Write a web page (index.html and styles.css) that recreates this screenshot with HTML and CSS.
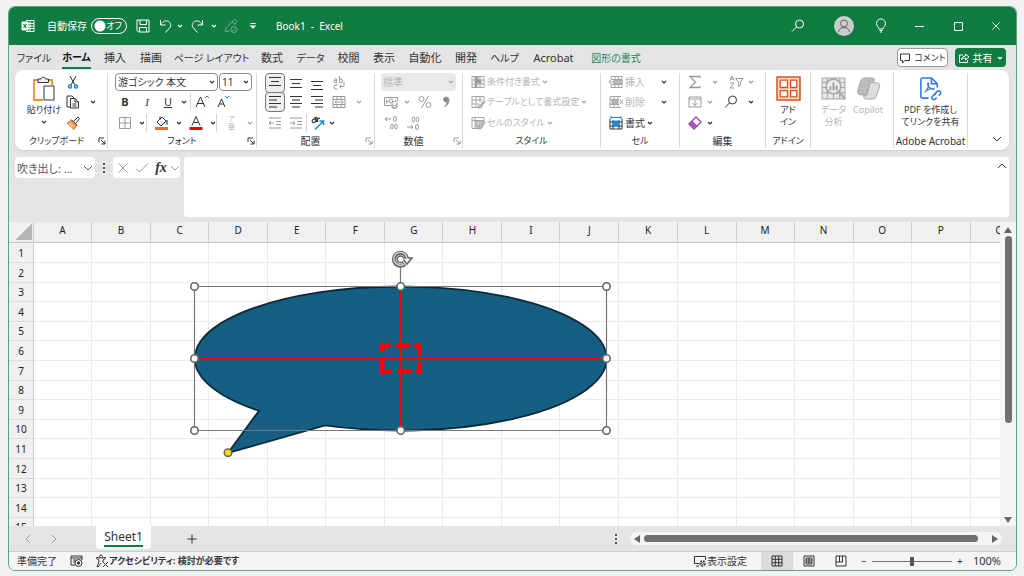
FILE: index.html
```html
<!DOCTYPE html>
<html lang="ja">
<head>
<meta charset="utf-8">
<title>Book1 - Excel</title>
<link rel="stylesheet" href="styles.css">
</head>
<body>
<svg class="defs" aria-hidden="true">
  <symbol id="chev" viewBox="0 0 8 8"><path d="M2 3l2 2 2-2"/></symbol>
  <symbol id="wide" viewBox="0 0 12 12"><path d="M2 4l4 4 4-4"/></symbol>
  <symbol id="launch" viewBox="0 0 8 8"><path d="M1 5V1h5M3 3l4 4M7 3.500V7H3.500"/></symbol>
  <symbol id="excel" viewBox="0 0 14 14"><path d="M5 1.500h8v11H5M5 4.500h8M5 7h8M5 9.500h8M9 1.500v11"/><path d="M1 3h6v8H1z" fill="#fff"/><path d="M2.500 5l3 4M5.500 5l-3 4" stroke="#107c41" stroke-width="1.200"/></symbol>
  <symbol id="save" viewBox="0 0 16 16"><path d="M2 2h12v12H3.500L2 12.500zM5 2v4.500h6.500V2M4.500 14V9.500h7V14"/></symbol>
  <symbol id="undo" viewBox="0 0 16 16"><path d="M2.500 2v5h5M2.500 7C5 3 8 2 10.500 3.500s3 4.500 1 6.500L7.500 14.500"/></symbol>
  <symbol id="redo" viewBox="0 0 16 16"><path d="M13.500 2v5h-5M13.500 7C11 3 8 2 5.500 3.500s-3 4.500-1 6.500l4 4.500"/></symbol>
  <symbol id="ink" viewBox="0 0 16 16"><path d="M2 14l1-4 8-8c1.500-1 3.500 1 2.500 2.500L11 7M2 14l5-1.500M9 4l3 2"/><circle cx="11" cy="11.500" r="3"/><path d="M9 13.500l4-4"/></symbol>
  <symbol id="qat" viewBox="0 0 8 8"><path d="M1.500 1.500h5M2 4l2 2 2-2z"/></symbol>
  <symbol id="search" viewBox="0 0 16 16"><circle cx="9.500" cy="6" r="4"/><path d="M6.500 9L2 13.500"/></symbol>
  <symbol id="bulb" viewBox="0 0 16 16"><path d="M6 11c0-2-2.500-2.500-2.500-5.500a4.500 4.500 0 0 1 9 0C12.500 8.500 10 9 10 11zM6.500 12.500h3M7 14h2"/></symbol>
  <symbol id="user" viewBox="0 0 20 20"><circle cx="10" cy="7.500" r="3.500"/><path d="M4.500 16c.5-6 10.500-6 11 0"/></symbol>
  <symbol id="paste" viewBox="0 0 24 26"><path d="M7 4H2v20h9M16 4h4v5" stroke="#e8912d" stroke-width="1.800"/><path d="M6 6.500V3h3c.5-2.500 4-2.500 4.500 0h3v3.500z" fill="#eee"/><path d="M12 10h10v14H12z" fill="#fff"/></symbol>
  <symbol id="cut" viewBox="0 0 16 16"><path d="M5 2l5 9M11 2l-5 9"/><g stroke="#1e88d2" stroke-width="1.500"><circle cx="5" cy="12.500" r="1.500"/><circle cx="11" cy="12.500" r="1.500"/></g></symbol>
  <symbol id="copy" viewBox="0 0 16 16"><path d="M5 13H2V2h5l2 2M5.500 4.500H10l3.500 3.500v6h-8zM10 4.500V8h3.500M7.500 10h4M7.500 12h4"/></symbol>
  <symbol id="brush" viewBox="0 0 16 16"><path d="M9 6l4-4 1.500 1.500L11 8" fill="#fff"/><path d="M2 8l5-3 5 5-3 4.500z" fill="#f7a258" stroke="#e07820"/><path d="M4 10l2-1M6 12l2-2" stroke="#fff"/><path d="M6 4.500l6 6"/></symbol>
  <symbol id="grow" viewBox="0 0 16 16"><path d="M2 13L6.500 3 11 13M3.500 9.500h6"/><path d="M11 4l2-2 2 2" stroke="#1e88d2"/></symbol>
  <symbol id="shrink" viewBox="0 0 16 16"><path d="M3 13l3.500-8 3.500 8M4.500 10h4.500"/><path d="M10 2l2 2 2-2" stroke="#1e88d2"/></symbol>
  <symbol id="border" viewBox="0 0 16 16"><path d="M2.500 2.500h11v11h-11zM8 2.500v11M2.500 8h11"/></symbol>
  <symbol id="fill" viewBox="0 0 16 16"><path d="M3 7l5-5 4 4-5 5zM6 1.500V5"/><path d="M13 5v4M12 5.500l1.500 4" stroke="#1e88d2" stroke-width="1.500"/><path d="M1 12h13v3H1z" fill="#ed7031" stroke="none"/></symbol>
  <symbol id="color" viewBox="0 0 16 16"><path d="M4 10.500L8 1.500l4 9M5.500 7.500h5"/><path d="M1.500 12h13v3h-13z" fill="#f00000" stroke="none"/></symbol>
  <symbol id="top" viewBox="0 0 16 16"><path d="M2 2.500h12M4 6.500h8M2 10.500h12"/></symbol>
  <symbol id="mid" viewBox="0 0 16 16"><path d="M2 4.500h12M4 8.500h8M2 12.500h12"/></symbol>
  <symbol id="bot" viewBox="0 0 16 16"><path d="M2 6.500h12M4 10.500h8M2 14.500h12"/></symbol>
  <symbol id="left" viewBox="0 0 16 16"><path d="M2 2.500h12M2 6h8M2 9.500h12M2 13h8"/></symbol>
  <symbol id="center" viewBox="0 0 16 16"><path d="M2 2.500h12M4 6h8M2 9.500h12M4 13h8"/></symbol>
  <symbol id="right" viewBox="0 0 16 16"><path d="M2 2.500h12M6 6h8M2 9.500h12M6 13h8"/></symbol>
  <symbol id="wrap" viewBox="0 0 16 16"><path d="M3 4h2.500v3.500H3.500a1 1 0 0 1 0-2h2M8.500 1v6.500h1.500a1.700 1.700 0 0 0 0-3.500H8.500M6.500 10H5a1.700 1.700 0 0 0 0 4h1.500M13 7v4.500H8.500M10.500 9.500l-2 2 2 2"/></symbol>
  <symbol id="merge" viewBox="0 0 16 16"><path d="M2 2.500h12v11H2zM2 5.500h12M2 10.500h12M6 2.500v3M10 2.500v3M6 10.500v3M10 10.500v3M4 8h8M5.500 6.500L4 8l1.500 1.500M10.500 6.500L12 8l-1.500 1.500"/></symbol>
  <symbol id="outdent" viewBox="0 0 16 16"><path d="M2 3h12M9 6.500h5M9 9.500h5M2 13h12M7 8H2M4 6L2 8l2 2"/></symbol>
  <symbol id="indent" viewBox="0 0 16 16"><path d="M2 3h12M9 6.500h5M9 9.500h5M2 13h12M2 8h5M5 6l2 2-2 2"/></symbol>
  <symbol id="orient" viewBox="0 0 16 16"><path d="M3 4.500c-2 2 0 4 2 2.500s0-4-2-2.500M5 4l2 3M7 5.500c2-1 0-4-2-3L8 7M10 3.500c-1-1-3 0-2 2" stroke-width="1.200"/><path d="M5 14.500l8-8M9.500 6H13.500v4" stroke="#1e88d2" stroke-width="1.500"/></symbol>
  <symbol id="cash" viewBox="0 0 16 16"><path d="M8 11.500H1.500v-8h13V7M3.500 5.500v4M3.500 7.500h2M12.500 5.500V7"/><circle cx="8" cy="7" r="1.800"/><path d="M9 9v4c0 2 5 2 5 0V9c0-2-5-2-5 0zM9 10c0 2 5 2 5 0M9 12c0 2 5 2 5 0"/></symbol>
  <symbol id="pct" viewBox="0 0 16 16"><circle cx="4.500" cy="5" r="2.500"/><circle cx="11.500" cy="11" r="2.500"/><path d="M11.500 2l-7 12"/></symbol>
  <symbol id="comma" viewBox="0 0 16 16"><path d="M8 3a2.500 2.500 0 1 0 1 4.800C9 10 8 11 6.500 12.500 9.500 11.500 11 9 11 6a3 3 0 0 0-3-3z" fill="#888"/></symbol>
  <symbol id="inc" viewBox="0 0 16 16"><path d="M8 4H2M4 2L2 4l2 2M6 13v.5"/><ellipse cx="12" cy="4" rx="1.500" ry="2.500"/><ellipse cx="9" cy="11.500" rx="1.300" ry="2.500"/><ellipse cx="13" cy="11.500" rx="1.300" ry="2.500"/></symbol>
  <symbol id="dec" viewBox="0 0 16 16"><path d="M2 12h6M6 10l2 2-2 2M5 6v.5"/><ellipse cx="8.500" cy="4.500" rx="1.300" ry="2.500"/><ellipse cx="12.500" cy="4.500" rx="1.300" ry="2.500"/><ellipse cx="12" cy="12" rx="1.500" ry="2.500"/></symbol>
  <symbol id="cond" viewBox="0 0 16 16"><path d="M2 2.500h12v11H2zM2 6h12M2 10h12M6 2.500v11M10 2.500v11"/><path d="M5 3h3v3H5zM5 6h6v3H5zM5 10h2v3H5z" fill="#999"/></symbol>
  <symbol id="tfmt" viewBox="0 0 16 16"><path d="M8 13.500H2v-11h12v4M2 6h10M2 10h7M6 2.500v11M10 2.500v6"/><path d="M8 14c0-3 1-3 2.500-3L14 6.500l1 1-3 4.500c0 2-2 2-4 2z" fill="#bbb"/></symbol>
  <symbol id="cstyle" viewBox="0 0 16 16"><path d="M8 13.500H2v-11h12v4M2 5.500h12M5 2.500v11"/><path d="M6 6h7l-5 6H6z" fill="#ccc"/><path d="M8 14c0-3 1-3 2.500-3L14 6.500l1 1-3 4.500c0 2-2 2-4 2z" fill="#bbb"/></symbol>
  <symbol id="cins" viewBox="0 0 16 16"><path d="M3 5V2.500h11v11H3V11M3 5.500h11M3 10.500h11M7 2.500v11M10.500 2.500v11M1 8h8M3.500 5.500L1 8l2.500 2.500"/><path d="M6 6h8v4H6z" fill="#bbb"/></symbol>
  <symbol id="cdel" viewBox="0 0 16 16"><path d="M2 2.500h11M2 13.500h11M2 2.500v11M2 5.500h9M2 10.500h9M6 2.500v11M10 2.500v3M10 10.500v3M12 6l3 4M15 6l-3 4"/><path d="M4 6h6v4H4z" fill="#bbb"/></symbol>
  <symbol id="cfmt" viewBox="0 0 16 16"><path d="M2 4v10h12V4M2 7h12M2 11h12M5 5v9M11 5v9"/><path d="M5 6h6v5H5zM3 2.500h10M3 1v3M13 1v3" fill="#1e88d2" stroke="#1e88d2"/></symbol>
  <symbol id="sum" viewBox="0 0 16 16"><path d="M13 4V2.500H3L8.500 8 3 13.500h10V12" stroke-width="1.300"/></symbol>
  <symbol id="sort" viewBox="0 0 16 16"><path d="M2 6.500L4 2l2 4.500M2.500 5h3M2 9h4l-4 5h4M7.500 4.500H15L12.500 8v3l-2 1.500V8z"/></symbol>
  <symbol id="down" viewBox="0 0 16 16"><path d="M2 3h12v10H2zM2 5h12M8 6v5.500M5.500 9L8 11.500 10.500 9"/></symbol>
  <symbol id="eraser" viewBox="0 0 16 16"><path d="M2 9l7-7 5 5-7 7z" stroke="#a13fae" stroke-width="1.300"/><path d="M2 9l3-3 5 5-3 3z" fill="#b653c2" stroke="#a13fae"/></symbol>
  <symbol id="addin" viewBox="0 0 24 24"><path d="M1 1h22v22H1z" fill="#fbd9ca" stroke="#d95328" stroke-width="1.500"/><path d="M4 4h7v7H4zM14 4h6v7h-6zM4 14h7v6H4zM14 14h6v6h-6z" fill="#fff" stroke="#d95328" stroke-width="1.300"/></symbol>
  <symbol id="data" viewBox="0 0 24 24"><path d="M1 2h22v20H1zM1 6h22M1 11h22M1 16h22M6 2v20M18 2v20M12 16v6" fill="#e6e6e6"/><circle cx="12" cy="10" r="7" fill="#eee" stroke-width="1.500"/><path d="M9 10v4M12 6v8M15 9v5" stroke-width="2"/><path d="M17 15l6 7" stroke-width="2"/></symbol>
  <symbol id="copilot" viewBox="0 0 26 24"><path d="M9 1h8c2 0 2.500 1 1.500 4L15 16c-1 2-2 2.500-4 2.500H5c-3 0-4-2-3-5L5 4c1-2 2-3 4-3z" fill="#bcbcbc"/><path d="M15 6h6c3 0 4 1.500 3.500 4l-3 9c-1 3-2 4-4.500 4h-6c-2 0-3-1-3-3.500h1c2 0 2.500-1 3-3L14 8c.5-1.500.5-2 1-2z" fill="#ddd"/><path d="M5 18.500h4c2 0 2.500-1 3-3L14 8" /></symbol>
  <symbol id="pdf" viewBox="0 0 24 26"><path d="M10 23H4c-1.500 0-2-1-2-2V4c0-1 1-2 2-2h9l6 6v4M13 2v6h6" stroke="#2f78e0" stroke-width="1.600"/><path d="M6 17c2-2 4-6 4-9 0-1-1-1-1 0 0 3 3 5 6 6 1 0 1-1 0-1-3 0-7 1.500-9 4z" stroke="#2f78e0" stroke-width="1.200"/><path d="M15 20l4-4c2-2 5 1 3 3l-1.500 1.500M18 18l-4 3c-2 2 1 5 3 3l1.500-1.500" stroke="#2f78e0" stroke-width="1.500"/></symbol>
  <symbol id="bubble" viewBox="0 0 12 12"><path d="M1.500 2h9v6.500H6L3.500 11V8.500h-2z"/></symbol>
  <symbol id="share" viewBox="0 0 12 12"><path d="M5 3H1.500v7.500h8V8M3.500 7.500C4 5 5.500 4 7.500 4V2L11 5 7.500 8V6C6 6 4.500 6.500 3.500 7.500z"/></symbol>
  <symbol id="x" viewBox="0 0 12 12"><path d="M1.500 1.500l9 9M10.500 1.500l-9 9"/></symbol>
  <symbol id="tick" viewBox="0 0 14 12"><path d="M1 6.500L4.500 10 13 1.500"/></symbol>
  <symbol id="rec" viewBox="0 0 14 14"><path d="M6 11H2V2h11v4M2 4h11M4 6h3M4 8h2"/><circle cx="9.500" cy="9" r="3.500"/><circle cx="9.500" cy="9" r="1.200" fill="#333"/></symbol>
  <symbol id="a11y" viewBox="0 0 14 14"><circle cx="6" cy="2.500" r="1.500"/><path d="M5 4L1.500 3.500v1L4 6l-.5 3L2 12.500l1 .5 3-4M7 4l3.500-.5v1L8 6v2M8 8l5 5M13 8l-5 5"/></symbol>
  <symbol id="disp" viewBox="0 0 14 14"><path d="M6 9.500H1.500v-7h11V6M3 12h3"/><circle cx="9.500" cy="9.500" r="2.500" stroke-width="1.500" stroke-dasharray="2 1"/><circle cx="9.500" cy="9.500" r="1"/></symbol>
  <symbol id="vnorm" viewBox="0 0 12 12"><path d="M1 1h10v10H1zM1 4.300h10M1 7.700h10M4.300 1v10M7.700 1v10"/></symbol>
  <symbol id="vpage" viewBox="0 0 12 12"><path d="M1 1h10v10H1zM3 3h6v6H3zM3 5h6M3 7h6M6 3v6"/></symbol>
  <symbol id="vbreak" viewBox="0 0 12 12"><path d="M1 1h10v10H1zM4.500 1v6h3M7.500 1v6M1 7h3.500"/></symbol>
</svg>

<div class="window">
  <header class="titlebar">
    <div class="quick">
      <svg class="i14"><use href="#excel"/></svg>
      <label for="autosave">自動保存</label>
      <span class="toggle"><input type="checkbox" id="autosave"><span>オフ</span></span>
      <button aria-label="上書き保存"><svg class="i16"><use href="#save"/></svg></button>
      <button aria-label="元に戻す"><svg class="i16"><use href="#undo"/></svg></button>
      <button aria-label="元に戻す 一覧"><svg class="i8"><use href="#chev"/></svg></button>
      <button aria-label="やり直し"><svg class="i16"><use href="#redo"/></svg></button>
      <button aria-label="やり直し 一覧"><svg class="i8"><use href="#chev"/></svg></button>
      <button class="dim" aria-label="インク"><svg class="i16"><use href="#ink"/></svg></button>
      <button aria-label="ユーザー設定"><svg class="i8"><use href="#qat"/></svg></button>
    </div>
    <span class="doc">Book1&nbsp; -&nbsp; Excel</span>
    <div class="controls">
      <button aria-label="検索"><svg class="i16"><use href="#search"/></svg></button>
      <button aria-label="アカウント"><svg class="avatar"><use href="#user"/></svg></button>
      <button aria-label="ヒント"><svg class="i16"><use href="#bulb"/></svg></button>
      <button aria-label="最小化"><span class="min"></span></button>
      <button aria-label="最大化"><span class="max"></span></button>
      <button aria-label="閉じる"><svg class="i10"><use href="#x"/></svg></button>
    </div>
  </header>

  <div class="tabrow">
    <nav class="tabs">
      <button class="kana">ファイル</button><button class="on kana"><span>ホーム</span></button><button>挿入</button><button>描画</button><button class="kana">ページ レイアウト</button><button>数式</button><button class="kana">データ</button><button>校閲</button><button>表示</button><button>自動化</button><button>開発</button><button class="kana">ヘルプ</button><button>Acrobat</button><button class="ctx">図形の書式</button>
    </nav>
    <div class="actions">
      <button class="comment"><svg class="i12"><use href="#bubble"/></svg>コメント</button>
      <button class="share"><svg class="i12"><use href="#share"/></svg>共有<svg class="i8"><use href="#chev"/></svg></button>
    </div>
  </div>

  <div class="ribbon">
    <section class="group g-clip">
      <div class="cliprow">
        <button class="big"><svg class="pasteicon"><use href="#paste"/></svg><span>貼り付け</span><svg class="i8"><use href="#chev"/></svg></button>
        <div class="rows">
          <div class="row clip"><button aria-label="切り取り"><svg class="i16"><use href="#cut"/></svg></button></div>
          <div class="row clip"><button aria-label="コピー"><svg class="i16"><use href="#copy"/></svg></button><button aria-label="コピー 一覧"><svg class="i8"><use href="#chev"/></svg></button></div>
          <div class="row clip"><button aria-label="書式のコピー"><svg class="i16"><use href="#brush"/></svg></button></div>
        </div>
      </div>
      <footer class="small">クリップボード<svg class="launch"><use href="#launch"/></svg></footer>
    </section>
    <section class="group g-font">
      <div class="rows">
        <div class="row fontsel">
          <span class="pick"><select aria-label="フォント"><option>游ゴシック 本文</option></select><svg class="i8"><use href="#chev"/></svg></span>
          <span class="pick"><select aria-label="サイズ"><option>11</option></select><svg class="i8"><use href="#chev"/></svg></span>
        </div>
        <div class="row font1">
          <button><b>B</b></button><button><i>I</i></button><button><u>U</u></button><button aria-label="下線 一覧"><svg class="i8"><use href="#chev"/></svg></button>
          <button class="sep" aria-label="拡大"><svg class="i16"><use href="#grow"/></svg></button><button aria-label="縮小"><svg class="i16"><use href="#shrink"/></svg></button>
        </div>
        <div class="row font2">
          <button class="gray" aria-label="罫線"><svg class="i16"><use href="#border"/></svg></button><button aria-label="罫線 一覧"><svg class="i8"><use href="#chev"/></svg></button>
          <button class="sep" aria-label="塗りつぶし"><svg class="i16"><use href="#fill"/></svg></button><button aria-label="塗りつぶし 一覧"><svg class="i8"><use href="#chev"/></svg></button>
          <button aria-label="文字色"><svg class="i16"><use href="#color"/></svg></button><button aria-label="文字色 一覧"><svg class="i8"><use href="#chev"/></svg></button>
          <button class="sep ruby off">ア<br>亜</button><button class="off" aria-label="ふりがな 一覧"><svg class="i8"><use href="#chev"/></svg></button>
        </div>
      </div>
      <footer class="small">フォント<svg class="launch"><use href="#launch"/></svg></footer>
    </section>
    <section class="group g-align">
      <div class="rows">
        <div class="row align"><button class="pressed" aria-label="上揃え"><svg class="i16"><use href="#top"/></svg></button><button aria-label="上下中央"><svg class="i16"><use href="#mid"/></svg></button><button aria-label="下揃え"><svg class="i16"><use href="#bot"/></svg></button><button class="gray" aria-label="折り返し"><svg class="i16"><use href="#wrap"/></svg></button></div>
        <div class="row align"><button class="pressed" aria-label="左揃え"><svg class="i16"><use href="#left"/></svg></button><button aria-label="中央揃え"><svg class="i16"><use href="#center"/></svg></button><button aria-label="右揃え"><svg class="i16"><use href="#right"/></svg></button><button class="gray" aria-label="結合"><svg class="i16"><use href="#merge"/></svg></button><button class="off" aria-label="結合 一覧"><svg class="i8"><use href="#chev"/></svg></button></div>
        <div class="row align3"><button class="gray" aria-label="字下げ解除"><svg class="i16"><use href="#outdent"/></svg></button><button class="gray" aria-label="字下げ"><svg class="i16"><use href="#indent"/></svg></button><button class="sep" aria-label="方向"><svg class="i16"><use href="#orient"/></svg></button><button aria-label="方向 一覧"><svg class="i8"><use href="#chev"/></svg></button></div>
      </div>
      <footer>配置<svg class="launch gray"><use href="#launch"/></svg></footer>
    </section>
    <section class="group g-num">
      <div class="rows">
        <div class="row numsel"><span class="pick off"><select aria-label="表示形式" disabled><option>標準</option></select><svg class="i8"><use href="#chev"/></svg></span></div>
        <div class="row num gray"><button aria-label="通貨"><svg class="i16"><use href="#cash"/></svg></button><button aria-label="通貨 一覧"><svg class="i8"><use href="#chev"/></svg></button><button aria-label="パーセント"><svg class="i16"><use href="#pct"/></svg></button><button aria-label="桁区切り"><svg class="i16"><use href="#comma"/></svg></button></div>
        <div class="row num2 gray"><button aria-label="桁を増やす"><svg class="i16"><use href="#inc"/></svg></button><button aria-label="桁を減らす"><svg class="i16"><use href="#dec"/></svg></button></div>
      </div>
      <footer>数値<svg class="launch gray"><use href="#launch"/></svg></footer>
    </section>
    <section class="group g-style">
      <div class="rows off">
        <button class="row item"><svg class="i16"><use href="#cond"/></svg>条件付き書式<svg class="i8"><use href="#chev"/></svg></button>
        <button class="row item"><svg class="i16"><use href="#tfmt"/></svg>テーブルとして書式設定<svg class="i8"><use href="#chev"/></svg></button>
        <button class="row item"><svg class="i16"><use href="#cstyle"/></svg>セルのスタイル<svg class="i8"><use href="#chev"/></svg></button>
      </div>
      <footer class="small">スタイル</footer>
    </section>
    <section class="group g-cell">
      <div class="rows">
        <div class="row cell"><button class="item off"><svg class="i16"><use href="#cins"/></svg>挿入</button><button aria-label="挿入 一覧"><svg class="i8"><use href="#chev"/></svg></button></div>
        <div class="row cell"><button class="item off"><svg class="i16"><use href="#cdel"/></svg>削除</button><button aria-label="削除 一覧"><svg class="i8"><use href="#chev"/></svg></button></div>
        <div class="row cell"><button class="item"><svg class="i16"><use href="#cfmt"/></svg>書式<svg class="i8"><use href="#chev"/></svg></button></div>
      </div>
      <footer class="small">セル</footer>
    </section>
    <section class="group g-edit">
      <div class="rows">
        <div class="row edit first gray"><button aria-label="合計"><svg class="i16"><use href="#sum"/></svg></button><button aria-label="合計 一覧"><svg class="i8"><use href="#chev"/></svg></button><button aria-label="並べ替え"><svg class="i16"><use href="#sort"/></svg></button><button aria-label="並べ替え 一覧"><svg class="i8"><use href="#chev"/></svg></button></div>
        <div class="row edit"><button class="gray" aria-label="フィル"><svg class="i16"><use href="#down"/></svg></button><button class="gray" aria-label="フィル 一覧"><svg class="i8"><use href="#chev"/></svg></button><button aria-label="検索と選択"><svg class="i16"><use href="#search"/></svg></button><button aria-label="検索 一覧"><svg class="i8"><use href="#chev"/></svg></button></div>
        <div class="row edit"><button aria-label="クリア"><svg class="i16"><use href="#eraser"/></svg></button><button aria-label="クリア 一覧"><svg class="i8"><use href="#chev"/></svg></button></div>
      </div>
      <footer>編集</footer>
    </section>
    <section class="group g-addin">
      <div class="bigs"><button class="big"><svg class="i24"><use href="#addin"/></svg><span>アド<br>イン</span></button></div>
      <footer class="small">アドイン</footer>
    </section>
    <section class="group g-data">
      <div class="bigs off"><button class="big"><svg class="i24"><use href="#data"/></svg><span>データ<br>分析</span></button><button class="big"><svg class="i24"><use href="#copilot"/></svg><span>Copilot</span></button></div>
    </section>
    <section class="group g-pdf">
      <div class="bigs"><button class="big"><svg class="i24"><use href="#pdf"/></svg><span>PDF を作成し<br>てリンクを共有</span></button></div>
      <footer>Adobe Acrobat</footer>
    </section>
    <div class="collapse"><button aria-label="リボンを折りたたむ"><svg class="i12"><use href="#wide"/></svg></button></div>
  </div>

  <div class="formulabar">
    <span class="pick namebox"><input aria-label="名前ボックス" value="吹き出し: ..."><svg class="i12"><use href="#wide"/></svg></span>
    <span class="dots"></span>
    <div class="fx">
      <button class="gray" aria-label="取消"><svg class="i12"><use href="#x"/></svg></button><button class="gray" aria-label="入力"><svg class="i14"><use href="#tick"/></svg></button><button class="fn">fx</button><button class="gray" aria-label="関数 一覧"><svg class="i12"><use href="#wide"/></svg></button>
    </div>
    <div class="formula"><textarea aria-label="数式バー"></textarea><button aria-label="数式バーを縮小"><svg class="i12 flip"><use href="#wide"/></svg></button></div>
  </div>

  <main class="work">
    <div class="sheet">
      <table><thead><tr id="cols"><th class="corner"></th></tr></thead><tbody id="cells"></tbody></table>
      <svg class="drawing" viewBox="9 222 991 304" role="img" aria-label="吹き出し: 円形">
        <path d="M259 410.760A206 72 0 1 1 325 425.460L228 453Z" fill="#156082" stroke="#0a2a3a" stroke-width="1.800"/>
        <path d="M194.500 286.500h412v144h-412zM400.500 286V266" fill="none" stroke="#777" stroke-width="1.200"/>
        <path d="M195 358.500H606" stroke="#f00" stroke-width="1.400"/>
        <path d="M401 288V430" stroke="#f00" stroke-width="2"/>
        <path d="M380 345.500H390.700M395.500 345.500H410M414.500 345.500h5V355.700M419.500 361V373.500M416 371.300h5.500M397 371.300H411.700M392 371.300H382.300V357.700M382.300 352V343.300" fill="none" stroke="#f00" stroke-width="4.500"/>
        <g fill="#fff" stroke="#666" stroke-width="1.600"><circle cx="194.500" cy="286.500" r="3.700"/><circle cx="400.700" cy="286.500" r="3.700"/><circle cx="606.500" cy="286.500" r="3.700"/><circle cx="194.500" cy="358.500" r="3.700"/><circle cx="606.500" cy="358.500" r="3.700"/><circle cx="194.500" cy="430.500" r="3.700"/><circle cx="400.700" cy="430.500" r="3.700"/><circle cx="606.500" cy="430.500" r="3.700"/><circle cx="228" cy="452.700" r="3.700" fill="#ffe000"/></g>
        <path d="M405 264A6.500 6.500 0 1 1 406.800 258" fill="none" stroke="#666" stroke-width="4"/>
        <path d="M402 258H412L407 264Z" fill="#fff" stroke="#666" stroke-width="1.500"/>
        <path d="M404.500 263.800A6.500 6.500 0 1 1 406.800 259.500" fill="none" stroke="#ddd" stroke-width="1.300"/>
        <path d="M403 261.500A3.300 3.300 0 1 1 403.600 258" fill="#fff" stroke="#666" stroke-width="1.500"/>
      </svg>
    </div>
    <div class="vscroll"><span class="arrow up"></span><span class="thumb"></span><span class="arrow dn"></span></div>
  </main>

  <div class="sheetbar">
    <button class="gray prev" aria-label="前のシート"><svg class="i12"><use href="#wide"/></svg></button>
    <button class="gray next" aria-label="次のシート"><svg class="i12"><use href="#wide"/></svg></button>
    <button class="sheettab"><span>Sheet1</span></button>
    <button class="plus" aria-label="新しいシート"><svg class="i12"><path d="M6 1.500v9M1.500 6h9"/></svg></button>
    <span class="dots"></span>
    <div class="hscroll"><span class="arrow lt"></span><span class="thumb"></span><span class="arrow rt"></span></div>
  </div>

  <footer class="status">
    <span>準備完了</span>
    <svg class="i14"><use href="#rec"/></svg>
    <button class="access"><svg class="i14"><use href="#a11y"/></svg>アクセシビリティ: 検討が必要です</button>
    <button class="display"><svg class="i14"><use href="#disp"/></svg>表示設定</button>
    <div class="views"><button class="on" aria-label="標準"><svg class="i12"><use href="#vnorm"/></svg></button><button aria-label="ページ レイアウト"><svg class="i12"><use href="#vpage"/></svg></button><button aria-label="改ページ"><svg class="i12"><use href="#vbreak"/></svg></button></div>
    <div class="zoom"><button>−</button><input type="range" aria-label="ズーム" min="0" max="200" value="100"><button>+</button></div>
    <span class="pct">100%</span>
  </footer>
</div>
<script src="sheet.js"></script>
</body>
</html>
```
FILE: styles.css
```css
* { box-sizing: border-box; }
body { margin: 0; padding: 6px 7px 5px 8px; height: 100vh; background: #f1f1f1; color: #333; font: 10px/12px "Noto Sans", "Noto Sans CJK JP", sans-serif; font-feature-settings: "palt"; }
button, input, select, textarea { font: inherit; font-feature-settings: inherit; color: inherit; background: none; border: 0; margin: 0; padding: 0; min-width: 0; }
button { display: flex; align-items: center; justify-content: center; white-space: nowrap; }
svg { fill: none; stroke: currentColor; stroke-width: 1; flex: none; display: block; }
.defs { position: absolute; width: 0; height: 0; }
.i8 { width: 8px; height: 8px; stroke-width: 1.2; }
.i10 { width: 10px; height: 10px; }
.i12 { width: 12px; height: 12px; }
.i14 { width: 14px; height: 14px; }
.i16 { width: 16px; height: 16px; }
.i24 { width: 25px; height: 25px; }
.gray { color: #999; }
.off { color: #b5b5b5; }
.off svg { color: #a5a5a5; }

.window { height: 100%; display: flex; flex-direction: column; background: #e4e4e4; border: 1px solid #55a87c; border-radius: 7px; overflow: hidden; }

.titlebar { flex: none; height: 38px; background: #107c41; color: #fff; display: flex; align-items: center; }
.quick { display: grid; grid-template-columns: 37px 42px 42px 26px 20px 8px 26px 8px 26px 18px; place-items: center; }
.quick .dim { color: #6fae8b; }
.toggle { position: relative; display: flex; align-items: center; }
.toggle input { appearance: none; width: 36px; height: 16px; border: 1px solid #fff; border-radius: 8px; background: radial-gradient(circle at 8px 7px, #fff 5px, transparent 6px); }
.toggle span { position: absolute; right: 5px; font-size: 9px; }
.doc { margin-left: 14px; font-size: 11px; font-size: 10px; }
.controls { margin-left: auto; display: grid; grid-template-columns: 52px 40px 34px 42px 36px 40px; justify-items: center; align-items: center; }
.controls button { width: 20px; height: 20px; }
.avatar { width: 20px; height: 20px; background: #ccc; border-radius: 50%; color: #666; }
.min { width: 9px; border-top: 1px solid #fff; }
.max { width: 9px; height: 9px; border: 1px solid #fff; border-radius: 1px; }

.tabrow { flex: none; height: 25px; display: flex; align-items: center; justify-content: space-between; padding: 0 10px 0 3px; }
.tabs { display: grid; grid-template-columns: 44px 41px 36px 36px 85px 36px 41px 35px 36px 46px 36px 41px 57px 68px; font-size: 11px; height: 25px; }
.tabs .kana { font-size: 10px; }
.tabs .on { font-weight: 700; color: #111; }
.tabs .on span { height: 22px; line-height: 21px; border-bottom: 2px solid #107c41; }
.tabs .ctx { color: #2a8553; }
.tabs .ctx { font-size: 10px; }
.actions { display: flex; gap: 7px; }
.actions button { height: 19px; border-radius: 4px; gap: 3px; }
.comment { width: 51px; background: #fff; border: 1px solid #999; font-size: 9px; }
.share { width: 51px; background: #107c41; color: #fff; }

.ribbon { flex: none; height: 80px; margin: 0 7px 0 6px; background: #fff; border-radius: 8px; box-shadow: 0 1px 2px #ccc; display: grid; grid-template-columns: 93fr 149fr 118fr 88fr 138fr 79fr 86fr 45fr 83fr 74fr 41fr; padding: 3px 0 2px; }
.ribbon > * { min-width: 0; }
.group { border-right: 1px solid #d8d8d8; display: flex; flex-direction: column; justify-content: space-between; }
.collapse { display: flex; align-items: flex-end; justify-content: flex-end; padding: 0 6px 3px 0; }
.group footer { height: 14px; display: grid; place-items: center; position: relative; white-space: nowrap; }
.group .small { font-size: 9px; }
.launch { position: absolute; right: 1px; bottom: 3px; width: 8px; height: 8px; }
.rows { display: grid; grid-template-rows: 18px 22px 20px; }
.row { display: grid; align-items: center; justify-items: center; }
.cliprow { display: flex; }
.big { flex-direction: column; justify-content: flex-start; text-align: center; font-size: 9px; }
.pasteicon { width: 24px; height: 26px; margin-top: 3px; }
.cliprow .big { width: 46px; margin-left: 6px; gap: 2px; }
.g-clip footer { padding-right: 9px; }
.clip { grid-template-columns: 20px 20px; margin-left: -4px; }
.fontsel { grid-template-columns: 103px 33px; gap: 1px; padding-left: 7px; justify-content: start; }
.pick { position: relative; display: flex; align-items: center; width: 100%; height: 18px; border: 1px solid #888; border-radius: 4px; }
.pick select, .pick input { appearance: none; width: 100%; height: 100%; padding: 0 2px; }
.pick svg { position: absolute; right: 1px; }
.pick.off { border: 0; background: #e9e9e9; color: #b5b5b5; }
.pick select:disabled { opacity: 1; }
.font1 { grid-template-columns: 22px 22px 20px 12px 22px 22px; padding-left: 6px; justify-content: start; font-size: 11px; }
.font1 i { font-family: "Liberation Serif", serif; }
.font2 { grid-template-columns: 24px 9px 30px 6px 28px 6px 30px 8px; padding-left: 5px; justify-content: start; }
.sep { border-left: 1px solid #d5d5d5; width: 100%; height: 18px; }
.ruby { font-size: 7px; line-height: 8px; }
.align { grid-template-columns: 21px 21px 21px 24px 16px; padding-left: 7px; justify-content: start; }
.align3 { grid-template-columns: 21px 21px 22px 8px; padding-left: 7px; justify-content: start; }
.pressed { width: 20px; height: 20px; background: #eee; border: 1px solid #777; border-radius: 4px; }
.g-align footer, .g-num footer { padding-right: 10px; }
.numsel { padding: 0 6px; }
.num { grid-template-columns: 22px 10px 26px 16px; padding-left: 5px; justify-content: start; }
.num2 { grid-template-columns: 22px 22px; padding-left: 5px; justify-content: start; }
.item { display: flex; justify-content: flex-start; gap: 1px; }
.g-style .item { padding-left: 7px; font-size: 9px; }
.cell { grid-template-columns: 52px 8px; padding-left: 7px; justify-content: start; justify-items: start; }
.edit { grid-template-columns: 20px 10px 32px 8px; padding-left: 5px; justify-content: start; }
.edit.first { grid-template-columns: 20px 20px 22px 8px; }
.bigs { display: flex; justify-content: center; gap: 7px; padding-top: 3px; align-items: flex-start; }
.bigs .big { gap: 3px; }

.formulabar { flex: none; height: 72px; display: flex; align-items: flex-start; padding: 7px 7px 5px 6px; }
.namebox { width: 80px; height: 21px; border: 0; background: #fff; font-size: 11px; color: #555; }
.dots { width: 18px; height: 21px; background: linear-gradient(#555 0 2px, transparent 2px 4px, #555 4px 6px, transparent 6px 8px, #555 8px) center / 2px 10px no-repeat; }
.fx { display: grid; grid-template-columns: 19px 20px 18px 10px; width: 67px; height: 21px; background: #fff; border-radius: 3px; }
.fn { font: italic 700 14px/16px "Liberation Serif", serif; }
.formula { flex: 1; align-self: stretch; margin-left: 4px; background: #fff; border-radius: 3px; display: flex; align-items: flex-start; }
.formula textarea { flex: 1; height: 100%; resize: none; }
.formula button { padding: 3px 1px 0 0; }
.flip { transform: rotate(180deg); }

.work { flex: 1; min-height: 0; display: flex; background: #f2f2f2; }
.sheet { flex: 1; min-width: 0; position: relative; overflow: hidden; background: #fff; }
table { border-collapse: separate; border-spacing: 0; table-layout: fixed; width: 1020px; }
th { background: #f0f0f0; font-weight: 400; color: #222; padding: 0; line-height: 12px; overflow: hidden; }
thead th { height: 21px; width: 58px; padding-bottom: 5px; border-right: 1px solid #ccc; border-bottom: 1px solid #c4c4c4; }
thead th:nth-child(odd) { width: 59px; }
thead .corner:first-child { width: 25px; background: linear-gradient(135deg, transparent 50%, #b5b5b5 50%) 7px 2px / 16px 16px no-repeat #f0f0f0; }
tbody th { height: 20px; border-right: 1px solid #c8c8c8; border-bottom: 1px solid #ddd; }
tbody td { border-right: 1px solid #ebebeb; border-bottom: 1px solid #ebebeb; padding: 0; }
tbody tr:nth-child(5n+3) th, tbody tr:nth-child(5n) th { height: 19px; }
.drawing { position: absolute; left: 0; top: 0; width: 991px; height: 304px; }
.vscroll { width: 16px; background: #f4f4f4; border-radius: 8px; display: flex; flex-direction: column; align-items: center; padding: 5px 0 3px; }
.thumb { background: #707070; border-radius: 4px; }
.vscroll .thumb { width: 7px; flex: 186 1 0; margin-top: 3px; }
.vscroll::after { content: ""; flex: 94 1 0; order: 1; }
.vscroll .dn { order: 2; }
.arrow { border: 4px solid transparent; flex: none; }
.up { border-top: 0; border-bottom: 6px solid #666; }
.dn { border-bottom: 0; border-top: 6px solid #666; }
.lt { border-left: 0; border-right: 6px solid #666; }
.rt { border-right: 0; border-left: 6px solid #666; }

.sheetbar { flex: none; height: 26px; display: flex; align-items: center; padding-right: 14px; border-bottom: 1px solid #ccc; }
.prev { margin-left: 13px; }
.next { margin-left: 14px; }
.prev svg { transform: rotate(90deg); }
.next svg { transform: rotate(-90deg); }
.sheettab { align-self: flex-start; height: 23px; width: 55px; margin-left: 36px; background: #fff; border-radius: 0 0 4px 4px; font-size: 12px; }
.sheettab span { border-bottom: 2px solid #107c41; line-height: 17px; }
.plus { margin-left: 35px; }
.sheetbar .dots { margin-left: auto; }
.hscroll { width: 372px; height: 13px; margin-left: 5px; padding: 0 4px; background: #f4f4f4; border-radius: 7px; display: flex; align-items: center; }
.hscroll .thumb { height: 7px; flex: 1; margin: 0 14px 0 4px; }

.status { flex: none; height: 18px; background: #f4f4f4; display: flex; align-items: center; padding: 0 15px 0 8px; white-space: nowrap; }
.status > svg { margin-left: 12px; }
.access { margin-left: 12px; font-weight: 700; font-size: 9px; }
.display { margin-left: auto; }
.views { display: grid; grid-template-columns: repeat(3, 32px); height: 100%; margin-left: 14px; }
.views .on { background: #dcdcdc; }
.zoom { display: flex; align-items: center; margin-left: 3px; gap: 4px; }
.zoom button { width: 8px; }
.zoom input { appearance: none; width: 80px; height: 10px; background: linear-gradient(#777, #777) center / 100% 1px no-repeat; }
.zoom input::-webkit-slider-thumb { appearance: none; width: 4px; height: 9px; background: #555; }
.pct { margin-left: 9px; font-size: 11px; }
```
FILE: sheet.js
```js
const cols = "ABCDEFGHIJKLMNOPQ".split("");
const head = document.getElementById("cols");
cols.forEach(function (name) {
  const th = document.createElement("th");
  th.textContent = name;
  head.appendChild(th);
});
const body = document.getElementById("cells");
for (let r = 1; r <= 15; r++) {
  const tr = body.insertRow();
  const th = document.createElement("th");
  th.textContent = r;
  tr.appendChild(th);
  cols.forEach(function () { tr.insertCell(); });
}
```
